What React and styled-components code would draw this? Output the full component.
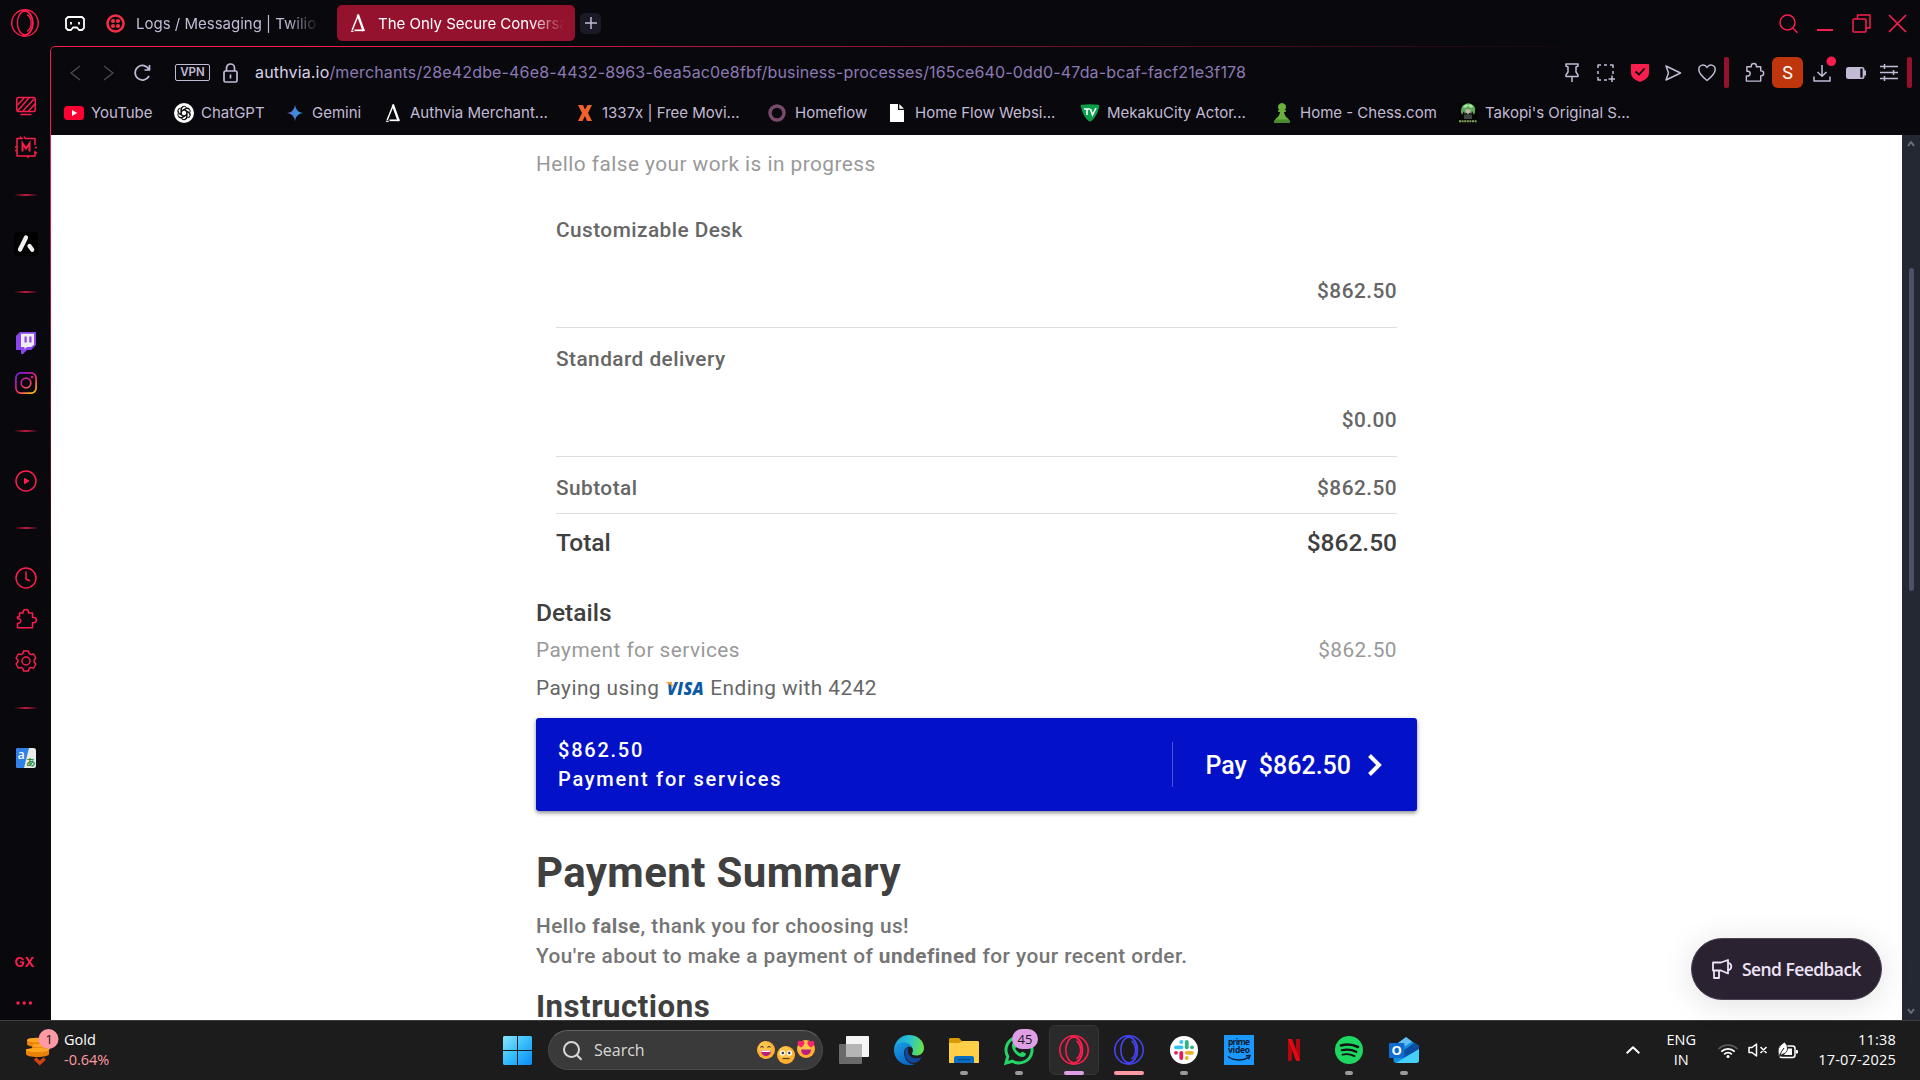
import React from "react";
import styled, { createGlobalStyle, css } from "styled-components";

const RED = "#fa1e4e";
const LILAC = "#c3bbd6";
const UI = `Inter, "Liberation Sans", sans-serif`;
const WIN = `"Open Sans", "Noto Sans", sans-serif`;

const Global = createGlobalStyle`
  * { box-sizing: border-box; }
  body { margin: 0; background: #09080d; overflow: hidden; }
  svg { display: block; flex: none; overflow: visible; }
`;

const Screen = styled.div`
  width: 1920px;
  height: 1080px;
  display: flex;
  flex-direction: column;
  overflow: hidden;
  background: #09080d;
  white-space: nowrap;
`;

const Browser = styled.div`
  height: 1020px;
  display: grid;
  grid-template-columns: 50px 1fr;
  grid-template-rows: 46px 974px;
  font-family: ${UI};
`;

const Corner = styled.div`
  display: flex;
  padding: 9px 0 0 11px;
`;

const TabStrip = styled.div`
  display: flex;
  align-items: center;
  padding: 0 12px 0 15px;
`;

const Tab = styled.div`
  display: flex;
  align-items: center;
  height: 36px;
  border-radius: 5px;
  margin-left: ${(p) => p.$ml}px;
  width: ${(p) => p.$w}px;
  padding-left: 14px;
  gap: ${(p) => p.$gap}px;
  background: ${(p) => (p.$active ? "#95122e" : "transparent")};
  color: ${(p) => (p.$active ? "#fff" : LILAC)};
  font-size: 15px;
`;

const TabTitle = styled.span`
  width: ${(p) => p.$w}px;
  overflow: hidden;
  line-height: 22px;
  padding-top: 1px;
  mask-image: linear-gradient(90deg, #000 82%, transparent 100%);
`;

const NewTab = styled.div`
  width: 21px;
  height: 21px;
  margin-left: 5px;
  border-radius: 5px;
  background: #1b1925;
  display: grid;
  place-items: center;
`;

const WindowControls = styled.div`
  margin-left: auto;
  display: grid;
  grid-template-columns: repeat(4, 36.5px);
  place-items: center;
  height: 46px;
  margin-right: -8px;
`;

const Side = styled.div`
  display: flex;
  flex-direction: column;
  align-items: center;
  padding: 49px 0 0 2px;
`;

const SideItem = styled.div`
  margin-top: ${(p) => p.$mt || 0}px;
  height: ${(p) => p.$h || 22}px;
  display: flex;
  align-items: center;
  justify-content: center;
`;

const SideRule = styled.div`
  width: 24px;
  height: 2px;
  flex: none;
  margin-top: ${(p) => p.$mt}px;
  background: linear-gradient(90deg, transparent, #c41a40 50%, transparent);
`;

const GX = styled.span`
  font: 700 13px/14px ${UI};
  color: ${RED};
  transform: scaleX(1.06);
  margin-right: 3px;
`;

const Main = styled.div`
  position: relative;
  display: flex;
  flex-direction: column;
  padding: 1px 0 0 1px;
  &::before {
    content: "";
    position: absolute;
    inset: 0;
    border-left: 1px solid ${RED};
    border-top: 1px solid ${RED};
    border-top-left-radius: 5px;
    mask-image: radial-gradient(ellipse 1560px 560px at 0 0, #000 15%, transparent 100%);
    pointer-events: none;
  }
`;

const AddressBar = styled.div`
  height: 51px;
  display: flex;
  align-items: center;
  padding-left: 13px;
`;

const NavButton = styled.div`
  width: ${(p) => p.$w || 33}px;
  height: 30px;
  display: flex;
  justify-content: ${(p) => (p.$center ? "center" : "flex-start")};
  padding-left: ${(p) => p.$pl ?? (p.$center ? 0 : 6)}px;
  align-items: center;
`;

const Vpn = styled.div`
  width: 35px;
  height: 17px;
  border: 1.5px solid ${LILAC};
  border-radius: 2px;
  color: ${LILAC};
  font: 600 11.5px/15px ${UI};
  text-align: center;
  margin-right: 13px;
`;

const Url = styled.div`
  margin-left: 17px;
  padding-bottom: 2px;
  font-size: 16px;
  line-height: 24px;
  letter-spacing: 0.156px;
  color: #8d7ab5;
  b { font-weight: 400; color: #d9d2ea; }
`;

const Tools = styled.div`
  margin-left: auto;
  display: flex;
  align-items: center;
  padding-right: 8px;
`;

const Divider = styled.div`
  width: 5px;
  height: 31px;
  border-radius: 2px;
  background: #95122e;
`;

const Avatar = styled.div`
  width: 31px;
  height: 31px;
  border-radius: 6px;
  background: #bf360c;
  color: #fff;
  font: 400 18px/32px Roboto, sans-serif;
  text-align: center;
`;

const Bookmarks = styled.div`
  height: 37px;
  display: flex;
  align-items: center;
  padding: 0 0 7px 13px;
`;

const Bookmark = styled.div`
  display: flex;
  align-items: center;
  gap: 7px;
  width: ${(p) => p.$w}px;
  flex: none;
  color: ${LILAC};
  font-size: 15px;
  line-height: 20px;
`;

const BookIcon = styled.div`
  width: 20px;
  height: 20px;
  display: grid;
  place-items: center;
`;

const Viewport = styled.div`
  height: 885px;
  display: flex;
  overflow: hidden;
  background: #fff;
`;

const Page = styled.main`
  flex: 1;
  height: 885px;
  overflow: hidden;
  padding-left: 485px;
  font-family: Roboto, "Liberation Sans", sans-serif;
`;

const Column = styled.div`
  width: 881px;
`;

const Text = styled.div`
  font-size: ${(p) => p.$size || 20.8}px;
  font-weight: ${(p) => p.$weight || 400};
  line-height: 30px;
  color: ${(p) => p.$color || "#666"};
  letter-spacing: ${(p) => p.$ls ?? 0.46}px;
  margin-top: ${(p) => p.$mt || 0}px;
`;

const Invoice = styled.section`
  padding: 0 20px;
  margin-top: 14px;
`;

const LineItem = styled.div`
  display: flex;
  flex-direction: column;
  gap: 31px;
  padding: ${(p) => p.$top}px 0 21px;
  border-bottom: 1px solid #dedede;
  > :last-child { align-self: flex-end; }
`;

const SumRow = styled.div`
  display: flex;
  justify-content: space-between;
  padding: ${(p) => p.$pad};
  ${(p) => p.$line && css`border-bottom: 1px solid #dedede;`}
`;

const Paying = styled(Text)`
  display: flex;
  align-items: center;
`;

const CardBrand = styled.div`
  margin: 0 6px 0 7px;
`;

const PayButton = styled.div`
  margin-top: 15px;
  height: 93px;
  display: flex;
  align-items: center;
  padding: 0 35px 0 22px;
  border-radius: 3px;
  background: #0311c8;
  color: #fff;
  box-shadow: 0 2px 4px rgba(0, 0, 0, 0.45);
`;

const PayInfo = styled.div`
  font-size: 20px;
  font-weight: 500;
  line-height: 29px;
  letter-spacing: 1.76px;
  flex: 1;
`;

const PayAction = styled.div`
  display: flex;
  align-items: center;
  height: 45px;
  padding-left: 32px;
  border-left: 1px solid #4a55dc;
  font-size: 25px;
  line-height: 30px;
  font-weight: 500;
  gap: 12px;
  span { padding-top: 2px; }
  svg { margin-left: 5px; }
`;

const Heading = styled.div`
  font-weight: 700;
  font-size: ${(p) => p.$size}px;
  line-height: ${(p) => p.$lh}px;
  letter-spacing: ${(p) => p.$ls}px;
  margin-top: ${(p) => p.$mt}px;
  color: #404040;
`;

const ScrollTrack = styled.div`
  width: 18px;
  background: #242833;
  display: flex;
  flex-direction: column;
  align-items: center;
  padding: 5px 0;
`;

const ScrollThumb = styled.div`
  width: 5px;
  height: 323px;
  margin: 120px 0 auto;
  border-radius: 3px;
  background: #4b5268;
`;

const Feedback = styled.div`
  position: absolute;
  right: 38px;
  bottom: 20px;
  width: 191px;
  height: 62px;
  border-radius: 31px;
  background: #2a2231;
  border: 1px solid #4c4456;
  box-shadow: 0 4px 32px rgba(0, 0, 0, 0.12);
  color: #eee4f8;
  display: flex;
  align-items: center;
  padding-left: 20px;
  gap: 10px;
  font: 600 17.5px/24px ${WIN};
  letter-spacing: -0.57px;
`;

const Taskbar = styled.footer`
  height: 60px;
  background: #1c1c1c;
  border-top: 1px solid #3d3d3d;
  display: grid;
  grid-template-columns: 490px 941px 1fr;
  font-family: ${WIN};
  color: #fff;
  padding-bottom: 1px;
`;

const Widget = styled.div`
  display: flex;
  align-items: center;
  padding-left: 24px;
  gap: 5px;
`;

const Stack = styled.div`
  display: flex;
  flex-direction: column;
  text-align: ${(p) => p.$align || "left"};
  font-size: 14.5px;
  line-height: 20px;
  letter-spacing: ${(p) => p.$ls || 0}px;
  margin-left: ${(p) => p.$ml || 0};
  padding-bottom: 1px;
`;

const Down = styled.span`
  color: #ff99a4;
`;

const Dock = styled.div`
  display: flex;
  align-items: center;
`;

const StartButton = styled.div`
  width: 58px;
  padding-left: 13px;
`;

const SearchBox = styled.div`
  width: 275px;
  height: 40px;
  border-radius: 20px;
  background: #3a3a3a;
  border: 1px solid #484848;
  border-top-color: #656565;
  display: flex;
  align-items: center;
  padding: 0 7px 0 14px;
  margin-right: 1px;
`;

const SearchLabel = styled.span`
  margin-left: 12px;
  flex: 1;
  font-size: 16px;
  line-height: 24px;
  color: #d8d8d8;
`;

const Emoji = styled.div`
  margin: ${(p) => p.$drop}px 0 0 2px;
`;

const DockItem = styled.div`
  position: relative;
  width: 50px;
  height: 50px;
  margin-left: 5px;
  border-radius: 6px;
  display: grid;
  place-items: center;
  ${(p) => p.$active && css`
    background: #2a2a2a;
    border: 1px solid #363636;
  `}
  &::after {
    content: "";
    position: absolute;
    bottom: ${(p) => (p.$active ? -1 : 0)}px;
    left: calc(50% - ${(p) => (p.$bar || 0) / 2}px);
    width: ${(p) => p.$bar || 0}px;
    height: 4px;
    border-radius: 2px;
    background: ${(p) => p.$barColor || "#9a9a9a"};
  }
`;

const Badge = styled.div`
  position: absolute;
  left: 18px;
  top: 4px;
  width: 26px;
  height: 20px;
  border-radius: 10px;
  background: #df9fe6;
  color: #1a1a1a;
  font-size: 13px;
  line-height: 20px;
  text-align: center;
  z-index: 1;
`;

const Tray = styled.div`
  display: flex;
  align-items: center;
  justify-content: flex-end;
  padding-right: 24px;
`;

const TrayIcons = styled.div`
  display: flex;
  align-items: center;
  gap: 10px;
  margin: 0 0 0 22px;
  width: 178px;
`;

const OperaMark = ({ size, color, w = 1.3 }) => (
  <svg width={size} height={size} viewBox="0 0 30 30" fill="none" stroke={color} strokeWidth={w}>
    <circle cx="15" cy="15" r="14.2" />
    <ellipse cx="15" cy="15" rx="8.2" ry="12.8" />
    <path d="M12 1.5C18 .8 23.500 6.500 23.500 15S18 29.200 12 28.500" />
    <path d="M17.500 6c5.500 4 5.500 14 0 18" />
  </svg>
);

const Authvia = () => (
  <svg width="14" height="18" viewBox="0 0 14 18" fill="none" stroke="#fff">
    <path d="M7.300 1 1.200 16" strokeWidth="1.500" />
    <path d="M6.800.500 12.700 17" strokeWidth="2.300" />
    <path d="M3.500 16.300H13.500" strokeWidth="1.700" />
    <path d="M0 17.300h2.600" strokeWidth="1.200" />
  </svg>
);

const Puzzle = ({ size = 22, color, flip }) => (
  <svg width={size} height={size} viewBox="0 0 22 22" fill="none" stroke={color} strokeWidth="1.5" strokeLinejoin="round">
    <path d={flip
      ? "M2.500 19.800h15v-5h1.200a2.700 2.700 0 0 0 0-5.400h-1.200V5H13.500v-.8a2.700 2.700 0 0 0-5.400 0V5H4.500v3.500l-2 .5v1.500l2 .5a2.200 2.200 0 0 1 0 4l-2 .5z"
      : "M2.500 20h15v-5.500h.5a2.600 2.600 0 0 0 0-5.200h-.5V5H13v-.8a2.700 2.700 0 0 0-5.400 0V5H3v4.600h1a2.500 2.500 0 0 1 0 5H2.500z"} />
  </svg>
);

const Search = ({ color, w = 1.5, size = 19 }) => (
  <svg width={size} height={size} viewBox="0 0 19 19" fill="none" stroke={color} strokeWidth={w}>
    <circle cx="8.500" cy="8.500" r="7.500" />
    <path d="m13.800 14 4.700 4.700" />
  </svg>
);

const Face = ({ kind }) => (
  <svg width="18" height="18" viewBox="0 0 18 18">
    <circle cx="9" cy="9" r="9" fill="#ffb02e" />
    <circle cx="8" cy="7" r="6.500" fill="#ffc54a" />
    {kind === "flat" ? (
      <g>
        <circle cx="5.500" cy="7" r="2.600" fill="#fff" /><circle cx="12.500" cy="7" r="2.600" fill="#fff" />
        <circle cx="5.800" cy="7" r="1.200" fill="#402a32" /><circle cx="12.200" cy="7" r="1.200" fill="#402a32" />
        <path d="M5.500 12.500h7" stroke="#5c3b1f" strokeWidth="1.200" />
      </g>
    ) : (
      <path d="M4 9.500h10a5 5.500 0 0 1-10 0z" fill="#bb1d80" />
    )}
    {kind === "grin" && (
      <g><path d="M3.500 6.500q1.500-2 3 0M10.500 6.500q1.500-2 3 0" stroke="#402a32" fill="none" strokeWidth="1.100" /><path d="M4.500 9.500h9v1.500h-9z" fill="#fff" /></g>
    )}
    {kind === "love" && (
      <path d="M4 7.500C-2 4 1-1.500 4 1.500c3-3 6 2.500 0 6zM14 7.500c-6-3.500-3-9 0-6 3-3 6 2.500 0 6z" fill="#f8256b" />
    )}
  </svg>
);

const Windows = () => (
  <svg width="29" height="29" viewBox="0 0 29 29">
    <defs><linearGradient id="win" x1="0" y1="0" x2="29" y2="29" gradientUnits="userSpaceOnUse"><stop stopColor="#8be4ff" /><stop offset=".5" stopColor="#36bdfb" /><stop offset="1" stopColor="#0a8bf5" /></linearGradient></defs>
    <path fill="url(#win)" d="M1 0h13v14H0V1zM15 0h13l1 1v13H15zM0 15h14v14H1l-1-1zM15 15h14v13l-1 1H15z" />
  </svg>
);

const TaskView = () => (
  <svg width="30" height="28" viewBox="0 0 30 28">
    <rect x="7" width="23" height="21" rx="1" fill="#f4f4f4" />
    <rect y="8" width="23" height="20" rx="1" fill="#6a6a6a" />
    <rect x="7" y="8" width="16" height="13" fill="#b5b5b5" />
  </svg>
);

const Edge = () => (
  <svg width="30" height="30" viewBox="0 0 30 30">
    <defs>
      <linearGradient id="e1" x1="0" x2="30" y1="4" y2="12" gradientUnits="userSpaceOnUse"><stop stopColor="#1a9fe0" /><stop offset=".5" stopColor="#2ac3cf" /><stop offset="1" stopColor="#6be53f" /></linearGradient>
      <linearGradient id="e2" x1="0" y1="8" x2="14" y2="30" gradientUnits="userSpaceOnUse"><stop stopColor="#1b9de2" /><stop offset="1" stopColor="#0864c9" /></linearGradient>
    </defs>
    <path fill="url(#e1)" d="M0 14C1 6 7 0 15 0c9 0 15 6 15 13 0 5-4 7.500-7.500 7.500-3 0-5-1-4.500-2 2-3 1-8-5-8.500C7 9.500 2 11 0 14z" />
    <path fill="url(#e2)" d="M0 15C.5 10 5 7.500 9.500 7.500c5 0 8 2.500 8.500 5.500-3-3-8-.5-8 5 0 6 5 12 11 11-2 1-4 1-6 1C6 30 0 23 0 15z" />
    <path fill="#12489b" d="M14 12c-3 2-4 5-3 9 1.500 5 7 8 11 6.500 3-1 5-3.500 6-5.500-5 3-14 1-14-6 0-2 .5-3 0-4z" />
  </svg>
);

const Folder = () => (
  <svg width="30" height="27" viewBox="0 0 30 27">
    <path d="M0 2 1 1h9l3 3h-1v5H0z" fill="#d99a00" />
    <path d="M0 6h10l3-2h16l1 1v21H0z" fill="#ffcf48" />
    <path d="M5 26v-5q0-2 2-2h16q2 0 2 2v5z" fill="#0a6fc4" />
    <path d="M9 22.500h12" stroke="#0b4f93" strokeWidth="1.300" />
  </svg>
);

const WhatsApp = () => (
  <svg width="30" height="30" viewBox="0 0 30 30">
    <path d="M2 28 3.800 21.500A13 13 0 1 1 8.500 26.200z" fill="none" stroke="#25d366" strokeWidth="3" />
    <path d="M8 9c1.500-2 3-1.500 3.500 0l1 2.500c0 1-1.500 1.500-1 2.500 1.200 2 2.500 3.200 4.500 4.200 1 .4 1.500-1.700 2.700-1.400l3 1.600c1 .8-.7 3.600-3.200 3.600C13 22 7 15 8 9z" fill="#25d366" />
  </svg>
);

const Slack = () => (
  <svg width="28" height="28" viewBox="0 0 28 28">
    <circle cx="14" cy="14" r="14" fill="#fff" />
    <g strokeWidth="3.800" strokeLinecap="round">
      <path d="M6 11.300h5.500" stroke="#36c5f0" /><path d="M11.300 6v.01" stroke="#36c5f0" />
      <path d="M16.800 6v5.300" stroke="#2eb67d" /><path d="M22 11.300h.01" stroke="#2eb67d" />
      <path d="M16.800 16.800H22" stroke="#ecb22e" /><path d="M16.800 22v.01" stroke="#ecb22e" />
      <path d="M11.300 16.800V22" stroke="#e01e5a" /><path d="M6 16.800h.01" stroke="#e01e5a" />
    </g>
  </svg>
);

const Prime = () => (
  <svg width="30" height="30" viewBox="0 0 30 30">
    <rect width="30" height="30" fill="#1a98ff" />
    <g fontFamily="Open Sans, sans-serif" fontWeight="700" fontSize="8.500" fill="#0b1a2c" textAnchor="middle">
      <text x="15" y="9.500" textLength="22">prime</text><text x="15" y="18" textLength="22">video</text>
    </g>
    <path d="M4 21.500c6 4.500 15 4.500 20.500.8M22 20.800l4-.2-1.500 3.700" fill="none" stroke="#0b1a2c" strokeWidth="1.500" />
  </svg>
);

const Netflix = () => (
  <svg width="12" height="22" viewBox="0 0 12 22">
    <path d="M0 0h4v21.500L0 22zM8 0h4v22l-4-.5z" fill="#b1060f" />
    <path d="M0 0h4l8 22-4-.5z" fill="#e50914" />
  </svg>
);

const Spotify = () => (
  <svg width="28" height="28" viewBox="0 0 28 28" fill="none" stroke="#111" strokeLinecap="round">
    <circle cx="14" cy="14" r="14" fill="#1ed760" stroke="none" />
    <path d="M6 9.500c6-1.700 12-1 17 1.500" strokeWidth="2.600" />
    <path d="M6.800 14.300c5-1.400 10-.8 14.500 1.500" strokeWidth="2.200" />
    <path d="M7.500 18.700c4-1 8-.6 12 1.400" strokeWidth="1.800" />
  </svg>
);

const Outlook = () => (
  <svg width="30" height="28" viewBox="0 0 30 28">
    <path d="M4.500 10 17 1.500 30 10v14q0 3-3 3H7.500q-3 0-3-3z" fill="#1490df" />
    <path d="M5 10 17 1l6 4.500L9 15z" fill="#64bdf2" />
    <path d="M30 10v4L14 22l-3-5L25 7z" fill="#0c4da2" />
    <path d="M30 13v11q0 3-3 3H7z" fill="#44d0f8" />
    <rect y="7" width="15.500" height="15" rx="1" fill="#0f6cd0" />
    <text x="7.700" y="19" textAnchor="middle" fontFamily="Open Sans, sans-serif" fontWeight="700" fontSize="13" fill="#fff">O</text>
  </svg>
);

const Coins = () => (
  <svg width="35" height="40" viewBox="0 0 35 40">
    <g fill="#e88208">
      <path d="M3 10v4c0 4 20 4 20 0v-4z" /><path d="M8 15v4c2 3 17 3 18 0v-4z" /><path d="M2 19v5c0 4 23 4 23 0v-5z" />
    </g>
    <g fill="#ffa51f"><ellipse cx="13" cy="10" rx="10" ry="2.300" /><ellipse cx="17" cy="15.500" rx="9" ry="1.800" /><ellipse cx="13.500" cy="20" rx="11.500" ry="2.200" /></g>
    <path d="m11 28.500 4.800 4.500 4.800-4.500" fill="none" stroke="#cf4316" strokeWidth="3.500" />
    <circle cx="24.500" cy="9" r="10" fill="#ff99a4" />
    <text x="25" y="14" textAnchor="middle" fontFamily="Open Sans, sans-serif" fontSize="13.500" fill="#1a1a1a">1</text>
  </svg>
);

const YouTube = () => (
  <svg width="20" height="14" viewBox="0 0 20 14"><rect width="20" height="14" rx="3.500" fill="#ff0033" /><path d="m8 4 5.200 3L8 10z" fill="#fff" /></svg>
);
const ChatGPT = () => (
  <svg width="20" height="20" viewBox="0 0 20 20">
    <circle cx="10" cy="10" r="10" fill="#fff" />
    <g fill="none" stroke="#111" strokeWidth="1.050">
      {[0, 60, 120, 180, 240, 300].map((a) => (
        <path key={a} transform={`rotate(${a} 10 10)`} d="M7 11.700V6.300a3 3 0 0 1 5.500-1.600M7.700 8.200l4.300-2.400a3 3 0 0 1 3 .2" />
      ))}
    </g>
  </svg>
);
const Gemini = () => (
  <svg width="16" height="18" viewBox="0 0 18 18">
    <defs><linearGradient id="gem"><stop stopColor="#9a68b8" /><stop offset=".35" stopColor="#4a7fd8" /><stop offset="1" stopColor="#2ba5dc" /></linearGradient></defs>
    <path d="M9 0q1 8 9 9-8 1-9 9-1-8-9-9 8-1 9-9z" fill="url(#gem)" />
  </svg>
);
const XMark = () => (
  <svg width="14" height="16" viewBox="0 0 14 16"><path d="M0 0h5l2 4.500L9.500 0H14l-4 8 4 8H9l-2-5-2.500 5H0l4-8z" fill="#f0622a" /></svg>
);
const Ring = () => (
  <svg width="18" height="18" viewBox="0 0 18 18"><circle cx="8" cy="9" r="7" fill="none" stroke="#7a4a6c" strokeWidth="3.400" /></svg>
);
const Doc = () => (
  <svg width="14" height="18" viewBox="0 0 14 18"><path d="M-1 0h8v6h6v12H-1z" fill="#fff" /><path d="M8.300 0 13 4.700H8.300z" fill="#fff" /></svg>
);
const TvBadge = () => (
  <svg width="20" height="18" viewBox="0 0 20 18">
    <path d="M1 3Q0 1 2 .800q8-1.300 16 0 2 .2 1 3Q17 12 12 16.500q-2 2-4 0Q3 12 1 3z" fill="#0a9f4b" />
    <path d="M4 5h6M7 5v6M10.500 5l2 6 3.500-7" fill="none" stroke="#fff" strokeWidth="1.600" />
  </svg>
);
const Pawn = () => (
  <svg width="16" height="20" viewBox="0 0 16 20">
    <path d="M7 0a4 4 0 0 1 2.700 7l1.300.3v1.500l-2 .2q.5 4 4 6.500Q15 17 15 20H-1q0-3 2-4.500Q4.500 13 5 9L3 8.800V7.300L4.300 7A4 4 0 0 1 7 0z" fill="#69b03e" />
    <path d="M-1 20q0-3 2-3.500h12q2 .5 2 3.500z" fill="#4b8a30" />
  </svg>
);
const Anime = () => (
  <svg width="20" height="20" viewBox="0 0 20 20">
    <rect width="20" height="20" fill="#050505" />
    <path d="M3 9q0-7 4-7.500Q10-1 14 1.500 18 3 17 9l-1 3-2-4-1 4-1-4H8l-1 4-1-4-2 4z" fill="#5fa95f" />
    <path d="M5 4q2-4 5-2 4-2 5 2l-2 1-3-2-3 2z" fill="#a6e59a" />
    <path d="M7.500 6.500h5v3L10 11 7.500 9.500z" fill="#c7b8a8" />
    <path d="m6 12 4-1 4 1v4H6z" fill="#3d4640" />
    <path d="M1 18.300h18" stroke="#84a55c" strokeWidth="2" strokeDasharray="2 .6" />
  </svg>
);

const bookmarks = [
  ["YouTube", 110, YouTube],
  ["ChatGPT", 111, ChatGPT],
  ["Gemini", 98, Gemini],
  ["Authvia Merchant...", 192, Authvia],
  ["1337x | Free Movi...", 193, XMark],
  ["Homeflow", 120, Ring],
  ["Home Flow Websi...", 192, Doc],
  ["MekakuCity Actor...", 193, TvBadge],
  ["Home - Chess.com", 185, Pawn],
  ["Takopi's Original S...", 190, Anime],
];

const Stroke = ({ w = 20, h = 20, color = LILAC, sw = 1.5, children }) => (
  <svg width={w} height={h} viewBox={`0 0 ${w} ${h}`} fill="none" stroke={color} strokeWidth={sw} strokeLinejoin="round">{children}</svg>
);

const Sidebar = () => (
  <Side>
    <SideItem>
      <Stroke w={20} h={20} color={RED}>
        <rect x=".8" y="1.500" width="18.400" height="14" rx="1.500" />
        <path d="M1.500 9 8 2M2 14.500 13 2M7 15 18 3M12.500 15 19 8M4.500 18.500h11" />
      </Stroke>
    </SideItem>
    <SideItem $mt={19}>
      <Stroke w={22} h={22} color={RED}>
        <path d="M20 9V2.500H10M8 2.500H2V20h18v-5M5.500 2.500V.5M9.500 2.500V.5M2 11H0M2 14.500H0M20 11.500h2M13 20v2M20 17h2" />
        <path d="M7.500 15.500v-8l3.500 5 3.500-5v8" strokeWidth="2" strokeLinejoin="miter" />
      </Stroke>
    </SideItem>
    <SideRule $mt={36} />
    <SideItem $mt={36} $h={24}>
      <svg width="24" height="24" viewBox="0 0 24 24">
        <rect width="24" height="24" rx="4" fill="#000" />
        <path d="M12 5.500 6 17.500M15.500 14l2.700 3.700" stroke="#f0f0ee" strokeWidth="4.300" strokeLinecap="round" />
      </svg>
    </SideItem>
    <SideRule $mt={35} />
    <SideItem $mt={39}>
      <svg width="20" height="22" viewBox="0 0 20 22">
        <path d="M4 0h16v13l-5 5h-4l-4 4H5v-4H0V4z" fill="#8b45f0" />
        <path d="M5 1.700h13v11L15 15h-4l-2.500 2.300V15H5z" fill="#eeeef2" />
        <path d="M8.500 4.500h2.200v6H8.500zM13.300 4.500h2.200v6h-2.200z" fill="#8b45f0" />
      </svg>
    </SideItem>
    <SideItem $mt={18}>
      <svg width="22" height="22" viewBox="0 0 22 22" fill="none" stroke="url(#ig)" strokeWidth="1.700">
        <defs><linearGradient id="ig" x1="3" y1="0" x2="19" y2="22" gradientUnits="userSpaceOnUse"><stop stopColor="#7a1cf0" /><stop offset=".5" stopColor="#e81a78" /><stop offset="1" stopColor="#ffc815" /></linearGradient></defs>
        <rect x=".9" y=".9" width="20.200" height="20.200" rx="5" /><circle cx="11" cy="11" r="4.800" /><circle cx="17" cy="5" r=".5" />
      </svg>
    </SideItem>
    <SideRule $mt={36} />
    <SideItem $mt={38}>
      <Stroke w={22} h={22} color={RED}><circle cx="11" cy="11" r="10" /><path d="m9.500 8.300 4.500 2.700-4.500 2.700z" fill={RED} strokeWidth="1" /></Stroke>
    </SideItem>
    <SideRule $mt={35} />
    <SideItem $mt={38}>
      <Stroke w={22} h={22} color={RED}><circle cx="11" cy="11" r="10" /><path d="M11 4.500V12l4 2" /></Stroke>
    </SideItem>
    <SideItem $mt={19}><Puzzle color={RED} flip /></SideItem>
    <SideItem $mt={20}>
      <Stroke w={22} h={22} color={RED}>
        <circle cx="11" cy="11" r="4" />
        <path d="M8.700 1h4.600l.9 2.600 1.700 1 2.700-.6 2.300 4-1.800 2v2l1.800 2-2.300 4-2.700-.6-1.700 1-.9 2.600H8.700l-.9-2.600-1.700-1-2.700.6-2.300-4 1.800-2v-2l-1.800-2 2.300-4 2.700.6 1.700-1z" />
      </Stroke>
    </SideItem>
    <SideRule $mt={35} />
    <SideItem $mt={38}>
      <svg width="20" height="20" viewBox="0 0 20 20">
        <rect width="20" height="20" rx="2.500" fill="#e9ebe6" />
        <path d="M2.500 0H13L8 20H2.500A2.500 2.500 0 0 1 0 17.500v-15A2.500 2.500 0 0 1 2.500 0z" fill="#2f80e8" />
        <text x="5.300" y="10.500" textAnchor="middle" fontFamily="Open Sans, sans-serif" fontSize="12" fontWeight="600" fill="#fff">a</text>
        <text x="14.700" y="17.500" textAnchor="middle" fontFamily="Noto Sans CJK JP, sans-serif" fontSize="9.500" fontWeight="700" fill="#2f8a3b">あ</text>
      </svg>
    </SideItem>
    <SideItem $mt={186} $h={14}><GX>GX</GX></SideItem>
    <SideItem $mt={29} $h={10}>
      <svg width="20" height="4" viewBox="0 0 20 4" fill={RED}><circle cx="2" cy="2" r="1.700" /><circle cx="8.200" cy="2" r="1.700" /><circle cx="14.400" cy="2" r="1.700" /></svg>
    </SideItem>
  </Side>
);

export default function App() {
  return (
    <Screen>
      <Global />
      <Browser>
        <Corner><OperaMark size={28} color={RED} w={1.5} /></Corner>
        <TabStrip>
          <Stroke w={20} h={15} color="#fff" sw={1.8}>
            <path d="M3 1h14l2 2v9l-2 2h-3l-2-2.500H8L6 14H3l-2-2V3z" /><path d="M6 6v2.500M14 6v2.500" />
          </Stroke>
          <Tab $w={245} $ml={7} $gap={11}>
            <svg width="19" height="19" viewBox="0 0 19 19">
              <circle cx="9.500" cy="9.500" r="8" fill="none" stroke="#f22f46" strokeWidth="2.600" />
              <g fill="#f22f46"><circle cx="7" cy="7" r="2.100" /><circle cx="12" cy="7" r="2.100" /><circle cx="7" cy="12" r="2.100" /><circle cx="12" cy="12" r="2.100" /></g>
            </svg>
            <TabTitle $w={184}>Logs / Messaging | Twilio Console</TabTitle>
          </Tab>
          <Tab $w={238} $ml={0} $gap={13} $active>
            <Authvia />
            <TabTitle $w={186}>The Only Secure Conversational</TabTitle>
          </Tab>
          <NewTab><Stroke w={12} h={12}><path d="M6 0v12M0 6h12" /></Stroke></NewTab>
          <WindowControls>
            <Search color={RED} />
            <Stroke w={16} h={18} color={RED} sw={2}><path d="M0 16h16" /></Stroke>
            <Stroke w={19} h={19} color={RED}><rect x="1" y="5" width="13" height="13" rx="1" /><path d="M5.500 5V1H18v13h-4" /></Stroke>
            <Stroke w={17} h={17} color={RED} sw={1.7}><path d="m0 0 17 17M17 0 0 17" /></Stroke>
          </WindowControls>
        </TabStrip>

        <Sidebar />

        <Main>
          <AddressBar>
            <NavButton><Stroke w={11} h={16} color="#4a4755"><path d="M10 1 1 8l9 7" /></Stroke></NavButton>
            <NavButton><Stroke w={11} h={16} color="#4a4755"><path d="m1 1 9 7-9 7" /></Stroke></NavButton>
            <NavButton $w={45} $pl={4}>
              <Stroke w={17} h={17} sw={1.7}><path d="M15.500 1v5h-5M15 5.500A7.300 7.300 0 1 0 15 12" /></Stroke>
            </NavButton>
            <Vpn>VPN</Vpn>
            <Stroke w={15} h={20} sw={1.7}><rect x="1" y="8" width="13" height="11" rx="1.500" /><path d="M3.500 8V5a4 4 0 0 1 8 0v3M7.500 11.500v4" /></Stroke>
            <Url><b>authvia.io</b>/merchants/28e42dbe-46e8-4432-8963-6ea5ac0e8fbf/business-processes/165ce640-0dd0-47da-bcaf-facf21e3f178</Url>
            <Tools>
              <NavButton $center $w={34}><Stroke w={14} h={19}><path d="M1 1h12v2l-2 1v5l2 3v1.500H1V12l2-3V4L1 3zM7 13.500V19" /></Stroke></NavButton>
              <NavButton $center $w={34}><Stroke w={18} h={18}><path d="M1 4V1h3M7 1h3M13 1h3v3M1 7v3M1 13v3h3M7 16h3M16 7v3" /><path d="M15 11.500v6.500M11.500 15H18" /></Stroke></NavButton>
              <NavButton $center $w={33}><svg width="18" height="19" viewBox="0 0 18 19"><path d="M1 1h16q1 0 1 1v8q0 6-9 9-9-3-9-9V2q0-1 1-1z" fill={RED} /><path d="m4.500 8.500 3.500 3 5.500-6" fill="none" stroke="#09080d" strokeWidth="1.800" /></svg></NavButton>
              <NavButton $center $w={34}><Stroke w={16} h={16}><path d="m1 1 14.500 7L1 15l2.500-7z" /></Stroke></NavButton>
              <NavButton $center $w={34}><Stroke w={18} h={17}><path d="M9 16.500C4 12.500.8 9.500.8 5.500c0-5 6-6 8.200-2 2.200-4 8.200-3 8.200 2 0 4-3.200 7-8.200 11z" /></Stroke></NavButton>
              <Divider />
              <NavButton $center $w={43} $pl={7}><Puzzle color={LILAC} size={21} /></NavButton>
              <Avatar>S</Avatar>
              <NavButton $center $w={38}>
                <Stroke w={18} h={18}><path d="M9 1v11M4.500 8 9 12.300 13.500 8M1 12.500V17h16v-4.500" /><circle cx="18.300" cy="-2.700" r="4.800" fill={RED} stroke="none" /></Stroke>
              </NavButton>
              <NavButton $center $w={29}><svg width="20" height="12" viewBox="0 0 20 12"><rect width="18.500" height="12" rx="2.500" fill={LILAC} /><rect x="14.300" y="1.500" width="2.300" height="9" fill="#09080d" /><rect x="18" y="3.500" width="2" height="5" fill={LILAC} /></svg></NavButton>
              <NavButton $center $w={37}><Stroke w={18} h={17}><path d="M0 2.500h18M0 8.500h18M0 14.500h18M4.500 0v5M13.500 6v5M4.500 12v5" /></Stroke></NavButton>
              <Divider />
            </Tools>
          </AddressBar>

          <Bookmarks>
            {bookmarks.map(([label, w, Icon]) => (
              <Bookmark key={label} $w={w}>
                <BookIcon><Icon /></BookIcon>
                {label}
              </Bookmark>
            ))}
          </Bookmarks>

          <Viewport>
            <Page>
              <Column>
                <Text $mt={14} $color="#999">Hello false your work is in progress</Text>
                <Invoice>
                  <LineItem $top={22}><Text $weight={500}>Customizable Desk</Text><Text $weight={500}>$862.50</Text></LineItem>
                  <LineItem $top={16}><Text $weight={500}>Standard delivery</Text><Text $weight={500}>$0.00</Text></LineItem>
                  <SumRow $pad="16px 0 10px" $line><Text $weight={500}>Subtotal</Text><Text $weight={500}>$862.50</Text></SumRow>
                  <SumRow $pad="14px 0 0"><Text $size={24.5} $weight={500} $ls={0} $color="#404040">Total</Text><Text $size={24.5} $weight={500} $ls={0} $color="#404040">$862.50</Text></SumRow>
                </Invoice>
                <Text $mt={40} $size={24.5} $weight={500} $ls={0} $color="#404040">Details</Text>
                <SumRow $pad="7px 20px 0 0"><Text $color="#999">Payment for services</Text><Text $color="#999">$862.50</Text></SumRow>
                <Paying $mt={8}>
                  Paying using
                  <CardBrand>
                    <svg width="38" height="13" viewBox="0 0 38 13">
                      <text x="1" y="13" textLength="37" lengthAdjust="spacingAndGlyphs" fontFamily="Open Sans, sans-serif" fontStyle="italic" fontWeight="800" fontSize="18" fill="#0a5aa5">VISA</text>
                      <path d="M0 0h5.500l1.800 5Q4 1.500 0 .700z" fill="#f9a533" />
                    </svg>
                  </CardBrand>
                  Ending with 4242
                </Paying>
                <PayButton>
                  <PayInfo><div>$862.50</div><div>Payment for services</div></PayInfo>
                  <PayAction>
                    <span>Pay</span><span>$862.50</span>
                    <svg width="14" height="22" viewBox="0 0 14 22" fill="none" stroke="#fff" strokeWidth="4"><path d="m1.500 1.500 9.500 9.500-9.500 9.500" /></svg>
                  </PayAction>
                </PayButton>
                <Heading $mt={37} $size={42} $lh={50} $ls={0.4}>Payment Summary</Heading>
                <Text $mt={13} $weight={500} $color="#757575">Hello <b>false</b>, thank you for choosing us!</Text>
                <Text $weight={500} $color="#757575">You're about to make a payment of <b>undefined</b> for your recent order.</Text>
                <Heading $mt={16} $size={31.2} $lh={40} $ls={0.5}>Instructions</Heading>
              </Column>
            </Page>
            <ScrollTrack>
              <Stroke w={8} h={8} color="#6c6f78" sw={2}><path d="m1 6 3-4 3 4" /></Stroke>
              <ScrollThumb />
              <Stroke w={8} h={8} color="#6c6f78" sw={2}><path d="m1 2 3 4 3-4" /></Stroke>
            </ScrollTrack>
          </Viewport>
          <Feedback>
            <Stroke w={20} h={20} color="#eee4f8" sw={1.8}>
              <path d="M1 3.500h8L16 1v13.500L9 11.500H1zM2 11.500V19h5v-7M16 3.500q3.300 1 3.300 4T16 11.500" />
            </Stroke>
            Send Feedback
          </Feedback>
        </Main>
      </Browser>

      <Taskbar>
        <Widget>
          <Coins />
          <Stack><span>Gold</span><Down>-0.64%</Down></Stack>
        </Widget>
        <Dock>
          <StartButton><Windows /></StartButton>
          <SearchBox>
            <Search color="#d8d8d8" w={2} />
            <SearchLabel>Search</SearchLabel>
            <Emoji $drop={0}><Face kind="grin" /></Emoji>
            <Emoji $drop={9}><Face kind="flat" /></Emoji>
            <Emoji $drop={-3}><Face kind="love" /></Emoji>
          </SearchBox>
          <DockItem><TaskView /></DockItem>
          <DockItem><Edge /></DockItem>
          <DockItem $bar={8}><Folder /></DockItem>
          <DockItem $bar={8}><Badge>45</Badge><WhatsApp /></DockItem>
          <DockItem $bar={20} $barColor="#df9fe6" $active><OperaMark size={30} color={RED} w={1.600} /></DockItem>
          <DockItem $bar={30} $barColor="#ff99a4"><OperaMark size={30} color="#4444f0" w={1.600} /></DockItem>
          <DockItem $bar={8}><Slack /></DockItem>
          <DockItem><Prime /></DockItem>
          <DockItem><Netflix /></DockItem>
          <DockItem $bar={8}><Spotify /></DockItem>
          <DockItem $bar={8}><Outlook /></DockItem>
        </Dock>
        <Tray>
          <Stroke w={14} h={8} color="#fff" sw={2}><path d="m.7 7.300 6.300-6 6.300 6" /></Stroke>
          <Stack $align="center" $ml="26px"><span>ENG</span><span>IN</span></Stack>
          <TrayIcons>
            <Stroke w={20} h={15} color="#fff" sw={1.700}>
              <path d="M.5 6a13.500 13.500 0 0 1 19 0" stroke="#5a5a5a" /><path d="M3.300 8.700a9.500 9.500 0 0 1 13.400 0M6.200 11.300a5.300 5.300 0 0 1 7.600 0" /><circle cx="10" cy="13.500" r="1.500" fill="#fff" stroke="none" />
            </Stroke>
            <Stroke w={20} h={14} color="#fff" sw={1.500}><path d="M1 4.500h3L8.500 1v12L4 9.500H1zM12.500 4l6 6M18.500 4l-6 6" /></Stroke>
            <svg width="20" height="17" viewBox="0 0 20 17">
              <rect x="1.500" y="4" width="15.500" height="11.500" rx="2.500" fill="none" stroke="#fff" strokeWidth="1.500" />
              <path d="M18 8h1.200q.8 0 .8.800v2q0 .800-.8.800H18z" fill="#fff" />
              <path d="M10 6.500h4v6.500H6z" fill="#fff" />
              <path d="M6.500 0Q10 3 9.500 7 9 11 4 12.500L2 14Q-1 10 .5 6.500 2 3 6.500 0z" fill="#fff" stroke="#1c1c1c" strokeWidth=".8" />
              <path d="M1.500 15Q3 9 6 6" stroke="#1c1c1c" fill="none" />
            </svg>
            <Stack $align="right" $ml="auto" $ls={0.22}><span>11:38</span><span>17-07-2025</span></Stack>
          </TrayIcons>
        </Tray>
      </Taskbar>
    </Screen>
  );
}
